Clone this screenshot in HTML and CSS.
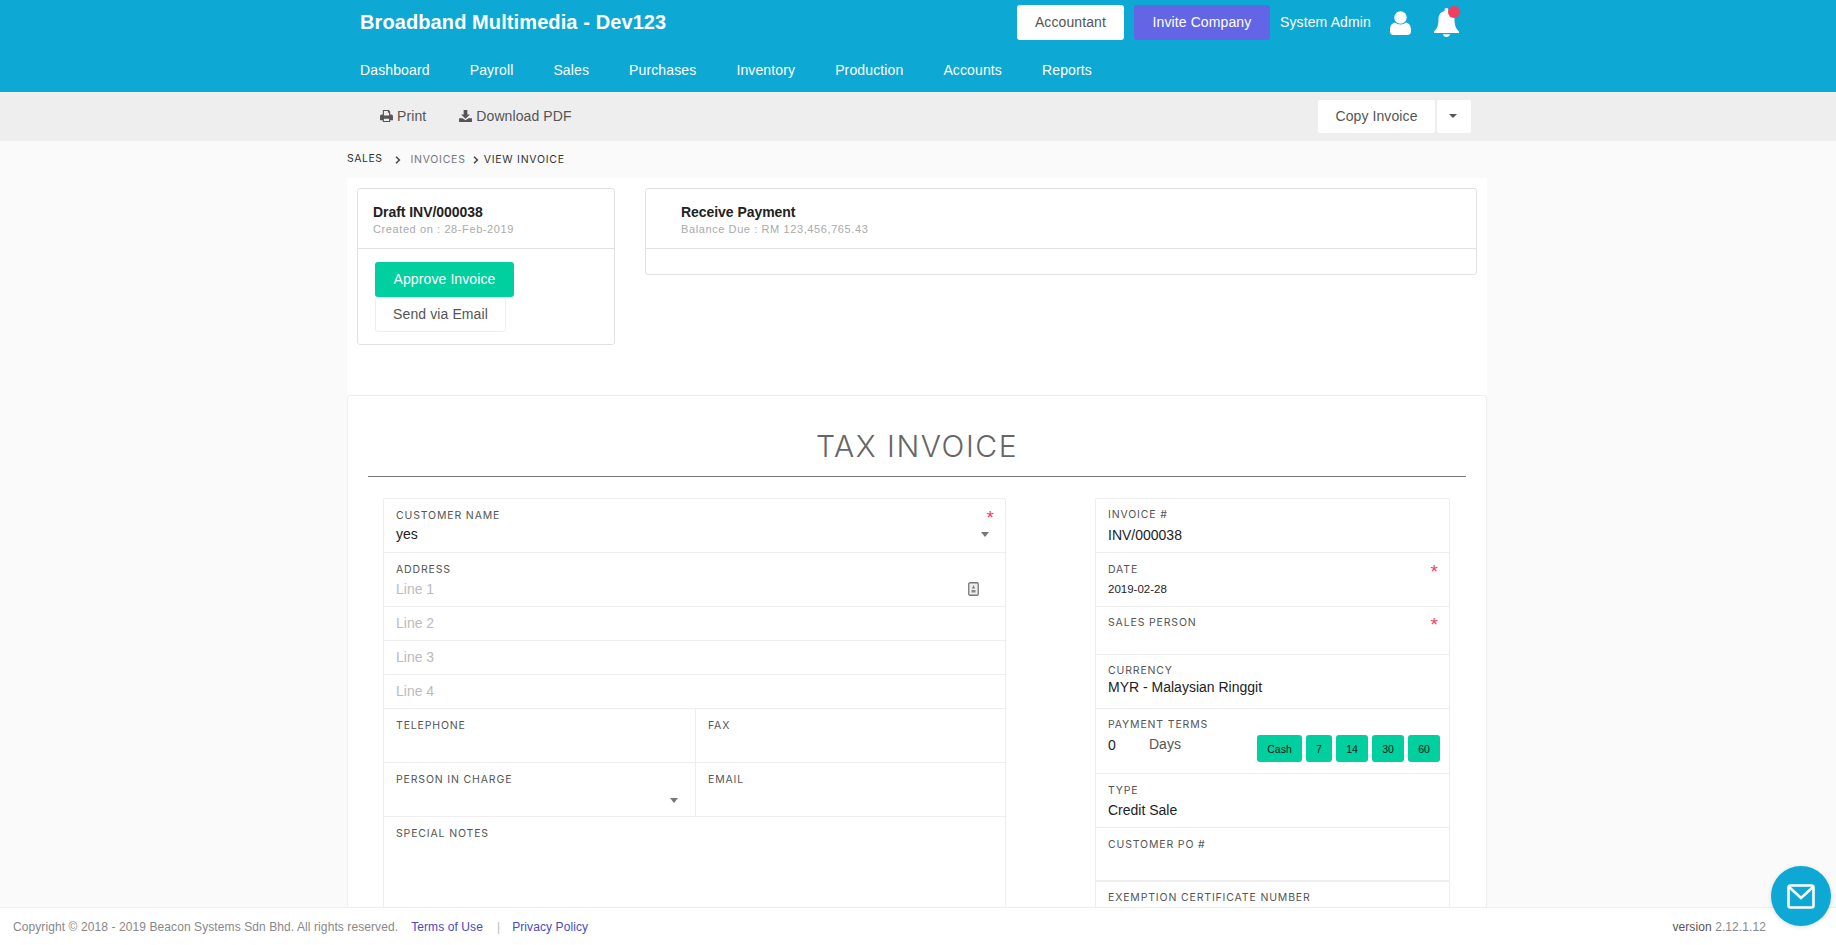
FILE: index.html
```html
<!DOCTYPE html>
<html lang="en">
<head>
<meta charset="utf-8">
<title>View Invoice</title>
<link rel="stylesheet" href="styles.css">
</head>
<body>
<header class="topbar">
  <div class="topbar-row">
    <div class="brand">Broadband Multimedia - Dev123</div>
    <button class="btn btn-white push">Accountant</button>
    <button class="btn btn-purple">Invite Company</button>
    <span class="username">System Admin</span>
    <svg class="user-icon" viewBox="0 0 21 24" width="21" height="24"><circle cx="10.5" cy="6.5" r="6.2" fill="#fff"/><path d="M0 19c0-5 2.500-7 5-7.500 1.500 1.300 3.300 2 5.500 2s4-.7 5.500-2c2.500.5 5 2.500 5 7.500v1.500c0 2-1.500 3.500-3.500 3.500h-14C1.500 24 0 22.500 0 20.500z" fill="#fff"/></svg>
    <div class="bell">
      <svg viewBox="0 0 25 29" width="25" height="29"><path d="M12.500 0c1.200 0 2 .9 2 2v1c3.800.9 6 4 6 8 0 6 1.200 9.500 4.500 12.500v1.500H0v-1.500C3.300 20.500 4.500 17 4.500 11c0-4 2.200-7.100 6-8V2c0-1.100.8-2 2-2z" fill="#fff"/><path d="M9 26.200h7c-.3 1.700-1.800 2.800-3.500 2.800S9.300 27.900 9 26.200z" fill="#fff"/></svg>
      <span class="bell-dot"></span>
    </div>
  </div>
  <nav class="mainnav">
    <a>Dashboard</a><a>Payroll</a><a>Sales</a><a>Purchases</a><a>Inventory</a><a>Production</a><a>Accounts</a><a>Reports</a>
  </nav>
</header>

<div class="toolbar">
  <a class="tool">
    <svg viewBox="0 0 14 13" width="13" height="12"><path d="M3 0h6.500L11 1.500V5h1.200c1 0 1.800.8 1.800 1.800V11h-3v2H3v-2H0V6.800C0 5.800.8 5 1.800 5H3zm1.200 1.200V6h5.600V3H8.500V1.200zm0 8.300v2.300h5.600V9.500z" fill="#555" fill-rule="evenodd"/></svg>
    Print
  </a>
  <a class="tool">
    <svg viewBox="0 0 14 13" width="13" height="12"><path d="M5 0h4v5h2.800L7 9.500 2.200 5H5z" fill="#555"/><path d="M0 9h3.800L7 11l3.200-2H14v4H0z" fill="#555"/></svg>
    Download PDF
  </a>
  <div class="copy-group">
    <button class="btn-flat copy-main">Copy Invoice</button>
    <button class="btn-flat copy-caret"><span class="caret"></span></button>
  </div>
</div>

<main class="page">
  <div class="crumbs">
    <span class="crumb crumb-first">SALES</span>
    <svg class="chev chev-first" viewBox="0 0 6 8" width="6" height="8"><path d="M1 .8 4.400 4 1 7.200" fill="none" stroke="#444" stroke-width="1.500"/></svg>
    <span class="crumb crumb-muted">INVOICES</span>
    <svg class="chev" viewBox="0 0 6 8" width="6" height="8"><path d="M1 .8 4.400 4 1 7.200" fill="none" stroke="#444" stroke-width="1.500"/></svg>
    <span class="crumb">VIEW INVOICE</span>
  </div>

  <section class="actions">
    <div class="panel panel-status">
      <div class="panel-head">
        <div class="panel-title">Draft INV/000038</div>
        <div class="panel-sub">Created on : 28-Feb-2019</div>
      </div>
      <div class="panel-body">
        <button class="btn-approve">Approve Invoice</button>
        <button class="btn-send">Send via Email</button>
      </div>
    </div>
    <div class="panel panel-payment">
      <div class="panel-head panel-head-wide">
        <div class="panel-title">Receive Payment</div>
        <div class="panel-sub">Balance Due : RM 123,456,765.43</div>
      </div>
      <div class="panel-foot"></div>
    </div>
  </section>

  <section class="invoice">
    <h1 class="invoice-title">TAX INVOICE</h1>
    <div class="columns">
      <div class="grid grid-left">
        <div class="row h54">
          <div class="label-row"><span class="label">CUSTOMER NAME</span><span class="req">*</span></div>
          <div class="value-row v2"><span class="value">yes</span><span class="arrow"></span></div>
        </div>
        <div class="row h54">
          <div class="label-row"><span class="label">ADDRESS</span></div>
          <div class="value-row v3"><span class="ph">Line 1</span>
            <svg class="book" viewBox="0 0 11 14" width="11" height="14"><rect x=".75" y=".75" width="9.500" height="12.500" rx="1.200" fill="#eee" stroke="#777" stroke-width="1.300"/><path d="M5.500 3 7 6.500H4z" fill="#777"/><rect x="3.500" y="8" width="4" height="2.500" fill="#888"/></svg>
          </div>
        </div>
        <div class="row line"><span class="ph">Line 2</span></div>
        <div class="row line"><span class="ph">Line 3</span></div>
        <div class="row line"><span class="ph">Line 4</span></div>
        <div class="split">
          <div class="cell h54"><span class="label">TELEPHONE</span></div>
          <div class="cell h54"><span class="label">FAX</span></div>
        </div>
        <div class="split">
          <div class="cell h54">
            <span class="label">PERSON IN CHARGE</span>
            <div class="value-row v2"><span class="arrow arrow-far"></span></div>
          </div>
          <div class="cell h54"><span class="label">EMAIL</span></div>
        </div>
        <div class="row notes"><span class="label">SPECIAL NOTES</span></div>
      </div>

      <div class="grid grid-right">
        <div class="row h54 tight">
          <div class="label-row"><span class="label">INVOICE #</span></div>
          <div class="value-row v4"><span class="value">INV/000038</span></div>
        </div>
        <div class="row h54">
          <div class="label-row"><span class="label">DATE</span><span class="req">*</span></div>
          <div class="value-row v3"><span class="value value-small">2019-02-28</span></div>
        </div>
        <div class="row h48 tight">
          <div class="label-row"><span class="label">SALES PERSON</span><span class="req">*</span></div>
        </div>
        <div class="row h54 tight">
          <div class="label-row"><span class="label">CURRENCY</span></div>
          <div class="value-row"><span class="value">MYR - Malaysian Ringgit</span></div>
        </div>
        <div class="row h65 tight">
          <div class="label-row"><span class="label">PAYMENT TERMS</span></div>
          <div class="terms">
            <span class="value term-num">0</span><span class="term-days">Days</span>
            <div class="chips"><span class="chip chip-cash">Cash</span><span class="chip chip-7">7</span><span class="chip">14</span><span class="chip">30</span><span class="chip">60</span></div>
          </div>
        </div>
        <div class="row h54">
          <div class="label-row"><span class="label">TYPE</span></div>
          <div class="value-row v3"><span class="value">Credit Sale</span></div>
        </div>
        <div class="row h54 thick">
          <div class="label-row"><span class="label">CUSTOMER PO #</span></div>
        </div>
        <div class="row notes tight"><span class="label">EXEMPTION CERTIFICATE NUMBER</span></div>
      </div>
    </div>
  </section>
</main>

<footer class="footer">
  <span class="copy">Copyright © 2018 - 2019 Beacon Systems Sdn Bhd. All rights reserved.</span>
  <a class="foot-link">Terms of Use</a>
  <span class="foot-sep">|</span>
  <a class="foot-link">Privacy Policy</a>
  <span class="version">version <span class="version-num">2.12.1.12</span></span>
</footer>

<button class="fab" aria-label="Messages">
  <svg viewBox="0 0 28 25" width="28" height="25"><rect x="1.500" y="1.500" width="25" height="22" rx="2" fill="none" stroke="#fff" stroke-width="2.600"/><path d="M2 3 14 14 26 3" fill="none" stroke="#fff" stroke-width="2.600"/></svg>
</button>
</body>
</html>
```
FILE: styles.css
```css
* { box-sizing: border-box; }
html, body { height: 100%; margin: 0; }
body {
  display: flex;
  flex-direction: column;
  overflow: hidden;
  background: #fafafa;
  font-family: "Liberation Sans", Arial, sans-serif;
  font-size: 14px;
  color: #222;
}
button { font-family: inherit; cursor: pointer; letter-spacing: .1px; }

/* Top bar */
.topbar { flex: none; height: 92px; background: #0da8d4; color: #fff; padding: 0 377px 0 360px; }
.topbar-row { display: flex; align-items: center; height: 45px; }
.brand { font-size: 20px; font-weight: 700; letter-spacing: .1px; margin-top: -1px; }
.push { margin-left: auto; }
.btn { height: 35px; border: 0; border-radius: 3px; font-size: 14px; padding: 0 0 1px; }
.btn-white { width: 107px; background: #fff; color: #555; }
.btn-purple { width: 136px; margin-left: 10px; background: #6464e6; color: #fff; }
.username { margin-left: 10px; font-size: 14px; letter-spacing: .13px; margin-top: -1px; }
.user-icon { margin-left: 19px; }
.bell { position: relative; width: 25px; height: 29px; margin-left: 23px; }
.bell svg { display: block; }
.bell-dot { position: absolute; top: -2px; left: 14px; width: 12px; height: 12px; border-radius: 50%; background: #f43e5f; }
.mainnav { display: flex; gap: 40px; padding-top: 16px; line-height: 18px; }
.mainnav a { color: #fff; font-size: 14px; letter-spacing: .13px; }

/* Toolbar */
.toolbar { flex: none; display: flex; align-items: center; height: 49px; padding: 0 365px 0 380px; background: #eee; color: #555; }
.tool { display: flex; align-items: center; gap: 4px; margin-right: 33px; padding-bottom: 1px; font-size: 14px; letter-spacing: .1px; }
.copy-group { display: flex; gap: 2px; margin-left: auto; }
.btn-flat { height: 33px; border: 0; border-radius: 2px; background: #fff; color: #555; font-size: 14px; padding: 0 0 2px; }
.copy-main { width: 117px; }
.copy-caret { width: 34px; display: flex; align-items: center; justify-content: center; padding-right: 3px; }
.caret { width: 0; height: 0; border-left: 4px solid transparent; border-right: 4px solid transparent; border-top: 4px solid #555; }

/* Page */
.page { flex: 1 1 0; min-height: 0; overflow: hidden; padding-left: 347px; width: 1487px; }
.crumbs { display: flex; align-items: center; height: 37px; }
.crumb { font-family: Inter, "Liberation Sans", sans-serif; font-size: 10.500px; letter-spacing: .75px; color: #333; }
.crumb-first { margin-top: -2px; letter-spacing: .5px; }
.crumb-muted { color: #777; }
.chev { margin: 0 5px 0 7px; }
.chev-first { margin: 0 9px 0 13px; }

.actions { display: flex; gap: 30px; height: 217px; padding: 10px 10px 0; background: #fff; align-items: flex-start; }
.panel { border: 1px solid #e2e2e2; border-radius: 3px; background: #fff; }
.panel-status { flex: none; width: 258px; height: 157px; }
.panel-payment { flex: 1; height: 87px; }
.panel-head { height: 60px; padding: 14px 15px 0; border-bottom: 1px solid #e2e2e2; }
.panel-head-wide { padding-left: 35px; }
.panel-title { font-size: 14px; font-weight: 700; letter-spacing: -.05px; line-height: 18px; color: #222; }
.panel-sub { font-size: 11px; letter-spacing: .6px; line-height: 14px; margin-top: 1px; color: #aaa; }
.panel-body { display: flex; flex-direction: column; align-items: flex-start; padding: 13px 0 0 17px; }
.btn-approve { width: 139px; height: 35px; border: 0; border-radius: 3px; background: #00cf9f; color: #fff; font-size: 14px; padding: 0 0 2px; }
.btn-send { width: 131px; height: 35px; border: 1px solid #eee; border-radius: 3px; background: #fff; color: #555; font-size: 14px; padding: 0 0 2px; }

.invoice { height: 600px; background: #fff; border: 1px solid #eee; border-radius: 3px; }
.invoice-title { height: 51px; margin: 30px 20px 0; padding-bottom: 10px; border-bottom: 1px solid #777; font-family: Inter, "Liberation Sans", sans-serif; font-weight: 300; font-size: 30px; line-height: 40px; letter-spacing: 1.55px; text-align: center; color: #666; }
.columns { display: flex; justify-content: space-between; padding: 21px 36px 0 35px; }
.grid { border: 1px solid #eee; border-radius: 2px; height: 500px; }
.grid-left { width: 623px; }
.grid-right { width: 355px; }
.row { padding: 9px 12px 0; border-bottom: 1px solid #eee; }
.h54 { height: 54px; }
.h48 { height: 48px; }
.h65 { height: 65px; }
.tight { padding-top: 8px; }
.thick { border-bottom-width: 2px; }
.line { height: 34px; padding-top: 0; line-height: 33px; }
.notes { border-bottom: 0; }
.split { display: flex; }
.cell { flex: 1; padding: 9px 12px 0; border-bottom: 1px solid #eee; }
.cell + .cell { flex: none; width: 310px; border-left: 1px solid #eee; }
.label-row { display: flex; justify-content: space-between; height: 14px; }
.label { display: block; font-family: Inter, "Liberation Sans", sans-serif; font-size: 10.500px; line-height: 16px; letter-spacing: .85px; color: #555; }
.req { color: #f43e5f; font-size: 19px; line-height: 19px; margin-right: -1px; }
.value-row { display: flex; align-items: center; justify-content: space-between; height: 20px; }
.v2 { margin-top: 2px; }
.v3 { margin-top: 3px; }
.v4 { margin-top: 4px; }
.value { font-size: 14px; line-height: 20px; color: #222; }
.value-small { font-size: 11.500px; }
.ph { font-size: 14px; color: #bbb; }
.arrow { width: 0; height: 0; margin: 0 4px 0 auto; border-left: 4px solid transparent; border-right: 4px solid transparent; border-top: 5px solid #777; }
.arrow-far { margin-right: 5px; }
.book { margin-right: 14px; }
.terms { display: flex; align-items: flex-start; }
.term-num { width: 41px; margin-top: 4px; }
.term-days { margin-top: 3px; line-height: 20px; color: #555; }
.chips { display: flex; gap: 4px; margin: 4px -3px 0 auto; }
.chip { display: flex; align-items: center; justify-content: center; width: 32px; height: 27px; border-radius: 3px; background: #00cf9f; color: #111; font-size: 10.500px; }
.chip-cash { width: 45px; }
.chip-7 { width: 26px; }

/* Footer */
.footer { position: relative; z-index: 2; flex: none; display: flex; align-items: center; height: 38px; padding: 0 70px 0 13px; background: #fff; border-top: 1px solid #eee; font-size: 12px; letter-spacing: .09px; color: #888; }
.foot-link { color: #4a4abf; }
.copy { margin-right: 13px; }
.foot-sep { margin: 0 12px 0 14px; color: #bbb; }
.version { margin-left: auto; color: #555; }
.version-num { color: #888; }

.fab { position: absolute; z-index: 3; right: 5px; bottom: 19px; display: flex; align-items: center; justify-content: center; width: 60px; height: 60px; border: 0; border-radius: 50%; background: #0da8d4; padding: 0; box-shadow: 0 1px 4px rgba(0,0,0,.15); }
```
